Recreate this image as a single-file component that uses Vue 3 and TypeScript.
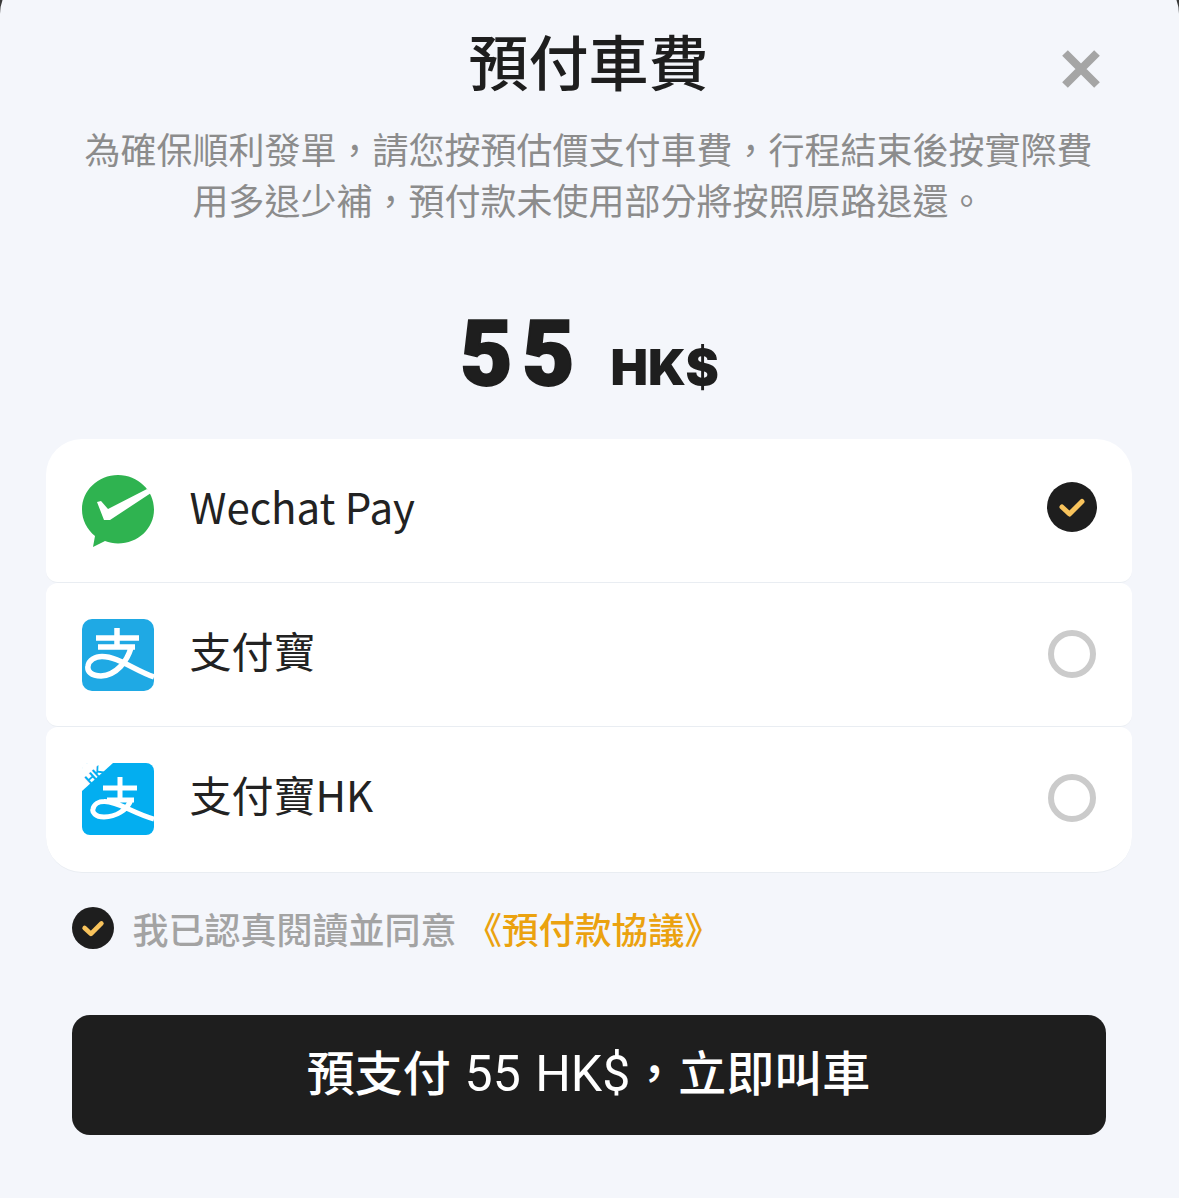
<script setup lang="ts">
interface Pay { id: string; label: string; checked: boolean }
const methods: Pay[] = [
  { id: 'wechat', label: 'Wechat Pay', checked: true },
  { id: 'alipay', label: '支付寶', checked: false },
  { id: 'alipayhk', label: '支付寶HK', checked: false },
]
</script>

<template>
  <div class="page">
    <main class="sheet">
      <header class="head">
        <h1 class="title">預付車費</h1>
        <svg class="close" viewBox="0 0 40 40" width="40" height="40" aria-label="close">
          <path d="M4 4 36 36M36 4 4 36" stroke="#a5a5a5" stroke-width="8" fill="none" />
        </svg>
      </header>
      <p class="desc">為確保順利發單，請您按預估價支付車費，行程結束後按實際費<br />用多退少補，預付款未使用部分將按照原路退還。</p>
      <div class="amount"><span class="num">55</span><span class="cur">HK$</span></div>

      <section class="card">
        <div v-for="m in methods" :key="m.id" class="row">
          <svg v-if="m.id === 'wechat'" class="logo" viewBox="0 0 72 72">
            <path d="M36 0C16 0 0 15.500 0 34.500 0 45 5 54.500 13 61L11 72 23 66C27 67.500 31.500 68.500 36 68.500 56 68.500 72 53.500 72 34.500 72 15.500 56 0 36 0Z" fill="#2fb350" />
            <path d="M15 27 19 26 26 34 65 14 69 18 28 45 22 45Z" fill="#fff" />
          </svg>
          <svg v-else-if="m.id === 'alipay'" class="logo" viewBox="0 0 72 72">
            <rect width="72" height="72" rx="10" fill="#1fa9e4" />
            <path d="M14 19H57M35 9V28M16 28H53M49 29C45 42 35 56 19 57 9 57 5 52 6 47 7 41 13 37.500 20 37.500 36 37.500 52 51 72 58" stroke="#fff" stroke-width="5.500" fill="none" />
          </svg>
          <svg v-else class="logo" viewBox="0 0 72 72">
            <rect width="72" height="72" rx="8" fill="#03aef0" />
            <path d="M0 28V6Q0 0 6 0H31Z" fill="#fff" />
            <path d="M21 25H55M38 14V37M25 37H52M49 37C45 47 34 54 22 54 13 54 10 49 11 46 12 41 17 38.500 22 38.500 36 38 50 50 72 56" stroke="#fff" stroke-width="5" fill="none" />
            <text transform="translate(15.500 15.500) rotate(-42)" text-anchor="middle" class="hk">HK</text>
          </svg>
          <span class="label">{{ m.label }}</span>
          <span v-if="m.checked" class="tick big">
            <svg viewBox="0 0 50 50"><path d="M15 25 22.500 32 35 19.500" stroke="#f8c35c" stroke-width="5" stroke-linecap="round" stroke-linejoin="round" fill="none" /></svg>
          </span>
          <span v-else class="radio"></span>
        </div>
      </section>

      <div class="agree">
        <span class="tick small">
          <svg viewBox="0 0 50 50"><path d="M15 25 22.500 32 35 19.500" stroke="#f8c35c" stroke-width="5.500" stroke-linecap="round" stroke-linejoin="round" fill="none" /></svg>
        </span>
        <span class="agree-text">我已認真閱讀並同意</span>
        <span class="link">《預付款協議》</span>
      </div>

      <button class="cta" type="button">預支付 <span class="latin">55 HK$</span>，立即叫車</button>
    </main>
  </div>
</template>

<style scoped>
.page {
  width: 1179px;
  height: 1198px;
  background: #3a3a3a;
  overflow: hidden;
}
.sheet {
  height: 1224px;
  margin-top: -26px;
  padding: 26px 2px 0 0;
  box-sizing: border-box;
  background: #f4f6fb;
  border-radius: 40px 40px 0 0;
  font-family: "Noto Sans CJK TC", "Noto Sans", sans-serif;
  display: flex;
  flex-direction: column;
  align-items: center;
}
.head {
  position: relative;
  width: 100%;
  height: 123px;
  display: flex;
  justify-content: center;
}
.title {
  margin: 16px 0 0;
  font-size: 60px;
  line-height: 88px;
  font-weight: 500;
  color: #1e1e1e;
}
.close {
  position: absolute;
  left: 1061px;
  top: 49px;
}
.desc {
  margin: 0;
  width: 1040px;
  font-size: 36px;
  line-height: 51px;
  text-align: center;
  color: #8c8c8c;
}
.amount {
  margin-top: 85px;
  height: 90px;
  display: flex;
  align-items: baseline;
  color: #1e1e1e;
  font-weight: 900;
}
.num {
  font-family: Roboto, "Liberation Sans", sans-serif;
  font-size: 90px;
  line-height: 90px;
  letter-spacing: 10px;
  margin-left: 2px;
  -webkit-text-stroke: 2px #1e1e1e;
}
.cur {
  margin-left: 26px;
  font-family: Inter, Roboto, sans-serif;
  font-size: 50px;
}
.card {
  margin-top: 39px;
  width: 1086px;
  display: flex;
  flex-direction: column;
}
.row {
  height: 144px;
  box-sizing: border-box;
  background: #fff;
  border-radius: 12px;
  border-bottom: 1px solid #e9edf2;
  padding: 0 35px 10px 36px;
  display: flex;
  align-items: center;
}
.row:nth-child(1) {
  border-top-left-radius: 36px;
  border-top-right-radius: 36px;
}
.row:nth-child(3) {
  height: 146px;
  padding-bottom: 12px;
  border-bottom-left-radius: 36px;
  border-bottom-right-radius: 36px;
}
.logo {
  width: 72px;
  height: 72px;
  flex: none;
  margin-top: 10px;
}
.hk {
  font: 700 14px "Liberation Sans", sans-serif;
  fill: #03aef0;
}
.label {
  margin-left: 36px;
  flex: 1;
  font-size: 42px;
  color: #222;
}
.tick {
  display: flex;
  flex: none;
  border-radius: 50%;
  background: #1e1e1e;
}
.tick svg {
  width: 100%;
  height: 100%;
}
.big {
  width: 50px;
  height: 50px;
  margin-top: 2px;
}
.small {
  width: 42px;
  height: 42px;
}
.radio {
  flex: none;
  box-sizing: border-box;
  width: 48px;
  height: 48px;
  margin: 8px 1px 0 0;
  border: 6px solid #cbcbcb;
  border-radius: 50%;
}
.agree {
  margin-top: 32px;
  width: 1034px;
  height: 46px;
  display: flex;
  align-items: center;
  font-size: 36px;
  font-weight: 500;
}
.agree-text {
  margin-left: 19px;
  color: #a3a3a3;
}
.link {
  margin-left: 9px;
  font-size: 36.500px;
  color: #eba20f;
}
.cta {
  margin-top: 64px;
  width: 1034px;
  height: 120px;
  padding: 0 0 10px;
  border: 0;
  border-radius: 18px;
  background: #1e1e1e;
  color: #fff;
  font-family: Roboto, "Noto Sans CJK TC", sans-serif;
  font-size: 48px;
  font-weight: 500;
  word-spacing: 2px;
}
.latin {
  font-size: 50px;
  font-weight: 400;
}
</style>
